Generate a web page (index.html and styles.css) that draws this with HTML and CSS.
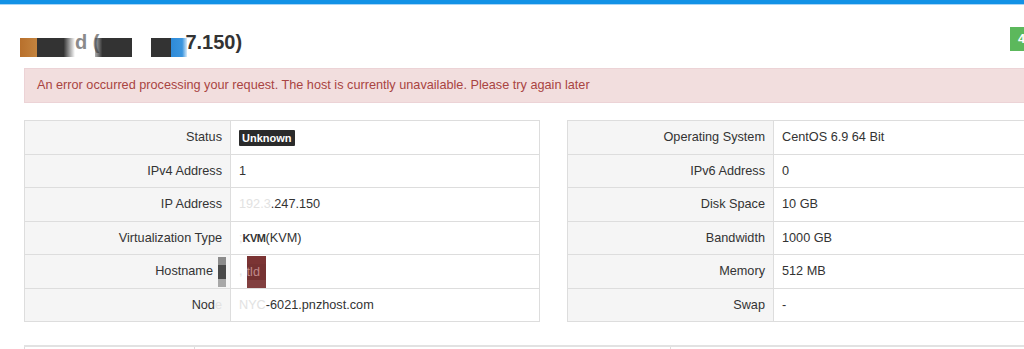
FILE: index.html
```html
<!DOCTYPE html>
<html lang="en">
<head>
    <meta charset="UTF-8">
    <meta name="viewport" content="width=device-width, initial-scale=1.0">
    <title>Server Details</title>
    <link rel="stylesheet" href="styles.css">
</head>
<body>
<div class="topbar"></div>

<div class="page">
    <div class="page-header">
        <h2 class="server-title"><span class="rd rd-orange"></span><span class="rd rd-dark rd-fade"></span><span class="blurred">d (</span><span class="rd rd-dark rd-back"></span><span class="rd rd-gap"></span><span class="rd rd-dark2"></span><span class="rd rd-blue"></span>7.150)</h2>
        <a href="#" class="btn-success">4 Login</a>
    </div>

    <div class="alert-danger">An error occurred processing your request. The host is currently unavailable. Please try again later</div>

    <div class="info-grid">
        <table class="info-table">
            <tr>
                <td class="label">Status</td>
                <td><span class="status-badge">Unknown</span></td>
            </tr>
            <tr>
                <td class="label">IPv4 Address</td>
                <td>1</td>
            </tr>
            <tr>
                <td class="label">IP Address</td>
                <td><span class="faint">192.3</span>.247.150</td>
            </tr>
            <tr>
                <td class="label">Virtualization Type</td>
                <td><span class="faint">;</span><span class="kvm">KVM</span>(KVM)</td>
            </tr>
            <tr>
                <td class="label label-smudge">Hostname<span class="smudge"></span></td>
                <td><span class="faint">,</span><span class="rd-red">tld</span></td>
            </tr>
            <tr>
                <td class="label">Nod<span class="faint">e</span></td>
                <td><span class="faint">NYC</span>-6021.pnzhost.com</td>
            </tr>
        </table>

        <table class="info-table">
            <tr>
                <td class="label">Operating System</td>
                <td>CentOS 6.9 64 Bit</td>
            </tr>
            <tr>
                <td class="label">IPv6 Address</td>
                <td>0</td>
            </tr>
            <tr>
                <td class="label">Disk Space</td>
                <td>10 GB</td>
            </tr>
            <tr>
                <td class="label">Bandwidth</td>
                <td>1000 GB</td>
            </tr>
            <tr>
                <td class="label">Memory</td>
                <td>512 MB</td>
            </tr>
            <tr>
                <td class="label">Swap</td>
                <td>-</td>
            </tr>
        </table>
    </div>

    <table class="bottom-table">
        <tr>
            <th class="col-a">&nbsp;</th>
            <th class="col-b">&nbsp;</th>
            <th>&nbsp;</th>
        </tr>
    </table>
</div>
</body>
</html>
```

FILE: styles.css
```css
* {
    margin: 0;
    padding: 0;
    box-sizing: border-box;
}

body {
    font-family: 'Liberation Sans', Arial, sans-serif;
    font-size: 12.7px;
    color: #333;
    background: #fff;
    overflow: hidden;
}

.topbar {
    height: 5px;
    background: #1292e6;
    border-bottom: 1px solid #a9d5f6;
}

.page {
    width: 1059px;
    margin-left: 24px;
}

/* header: title + button */
.page-header {
    display: flex;
    justify-content: space-between;
    align-items: flex-start;
    padding-top: 22px;
}

.server-title {
    font-size: 20px;
    font-weight: bold;
    line-height: 22px;
    height: 26px;
    margin: 4px 0 0 -4px;
    color: #333;
    white-space: nowrap;
}

.rd {
    display: inline-block;
    height: 19px;
    vertical-align: -8px;
}
.rd-orange {
    width: 17px;
    background: linear-gradient(to right, #b8702c, #c4843f);
}
.rd-dark {
    width: 38px;
    background: #333;
}
.rd-fade {
    background: linear-gradient(to right, #333 70%, rgba(51, 51, 51, 0));
}
.rd-back {
    width: 37px;
    margin-left: -4px;
    background: linear-gradient(to right, rgba(51, 51, 51, 0.4), #333 20%);
}
.rd-gap {
    width: 19px;
}
.rd-dark2 {
    width: 20px;
    background: #333;
}
.rd-blue {
    width: 16px;
    margin-right: -2px;
    background: linear-gradient(to right, #2e8ad8, #3b95de 70%, rgba(59, 149, 222, 0.2));
}
.blurred {
    color: #8a8a8a;
}

.btn-success {
    display: block;
    width: 73px;
    height: 24px;
    line-height: 24px;
    padding-left: 8px;
    background: #5cb85c;
    color: #fff;
    font-size: 13px;
    font-weight: bold;
    text-decoration: none;
    white-space: nowrap;
}

/* error message */
.alert-danger {
    margin-top: 11px;
    padding: 8px 12px;
    line-height: 17px;
    background: #f2dede;
    border: 1px solid #ecd3d6;
    color: #a94442;
}

/* details tables */
.info-grid {
    display: grid;
    grid-template-columns: 516px 516px;
    column-gap: 27px;
    align-items: start;
    margin-top: 17px;
}

.info-table {
    width: 100%;
    border-collapse: collapse;
    border: 1px solid #ddd;
}
.info-table td {
    border: 1px solid #ddd;
    padding: 7px 8px;
    height: 33.5px;
    line-height: 18.5px;
    white-space: nowrap;
}
.info-table td.label {
    width: 40%;
    text-align: right;
    background: #f5f5f5;
}

.status-badge {
    display: inline-block;
    background: #2b2b2b;
    color: #fff;
    font-size: 11px;
    font-weight: bold;
    line-height: 14px;
    padding: 1px 3px;
    border-radius: 1px;
    vertical-align: -1px;
}

.faint {
    color: #e2e2e2;
}
.kvm {
    font-size: 11px;
    font-weight: bold;
    letter-spacing: -0.5px;
}

.label-smudge {
    padding-right: 4px !important;
}
.smudge {
    display: inline-block;
    width: 8px;
    height: 14px;
    margin-left: 5px;
    vertical-align: middle;
    background: #4a4a4a;
    box-shadow: 0 -8px 0 rgba(70, 70, 70, 0.6), 0 8px 0 rgba(90, 90, 90, 0.5);
}

.rd-red {
    display: inline-block;
    width: 19px;
    height: 16px;
    margin-left: 4px;
    line-height: 16px;
    vertical-align: middle;
    color: rgba(255, 215, 215, 0.55);
    background: #753232;
    box-shadow: 0 -8px 0 #7b3434, 0 8px 0 #824040;
    overflow: hidden;
}

/* table below, mostly off screen */
.bottom-table {
    width: 100%;
    margin-top: 23px;
    border-collapse: collapse;
    border-top: 2px solid #e2e2e2;
}
.bottom-table th {
    border: 1px solid #ddd;
    border-top: none;
    padding: 8px;
    text-align: left;
}
.bottom-table .col-a {
    width: 170px;
}
.bottom-table .col-b {
    width: 476px;
}
```
